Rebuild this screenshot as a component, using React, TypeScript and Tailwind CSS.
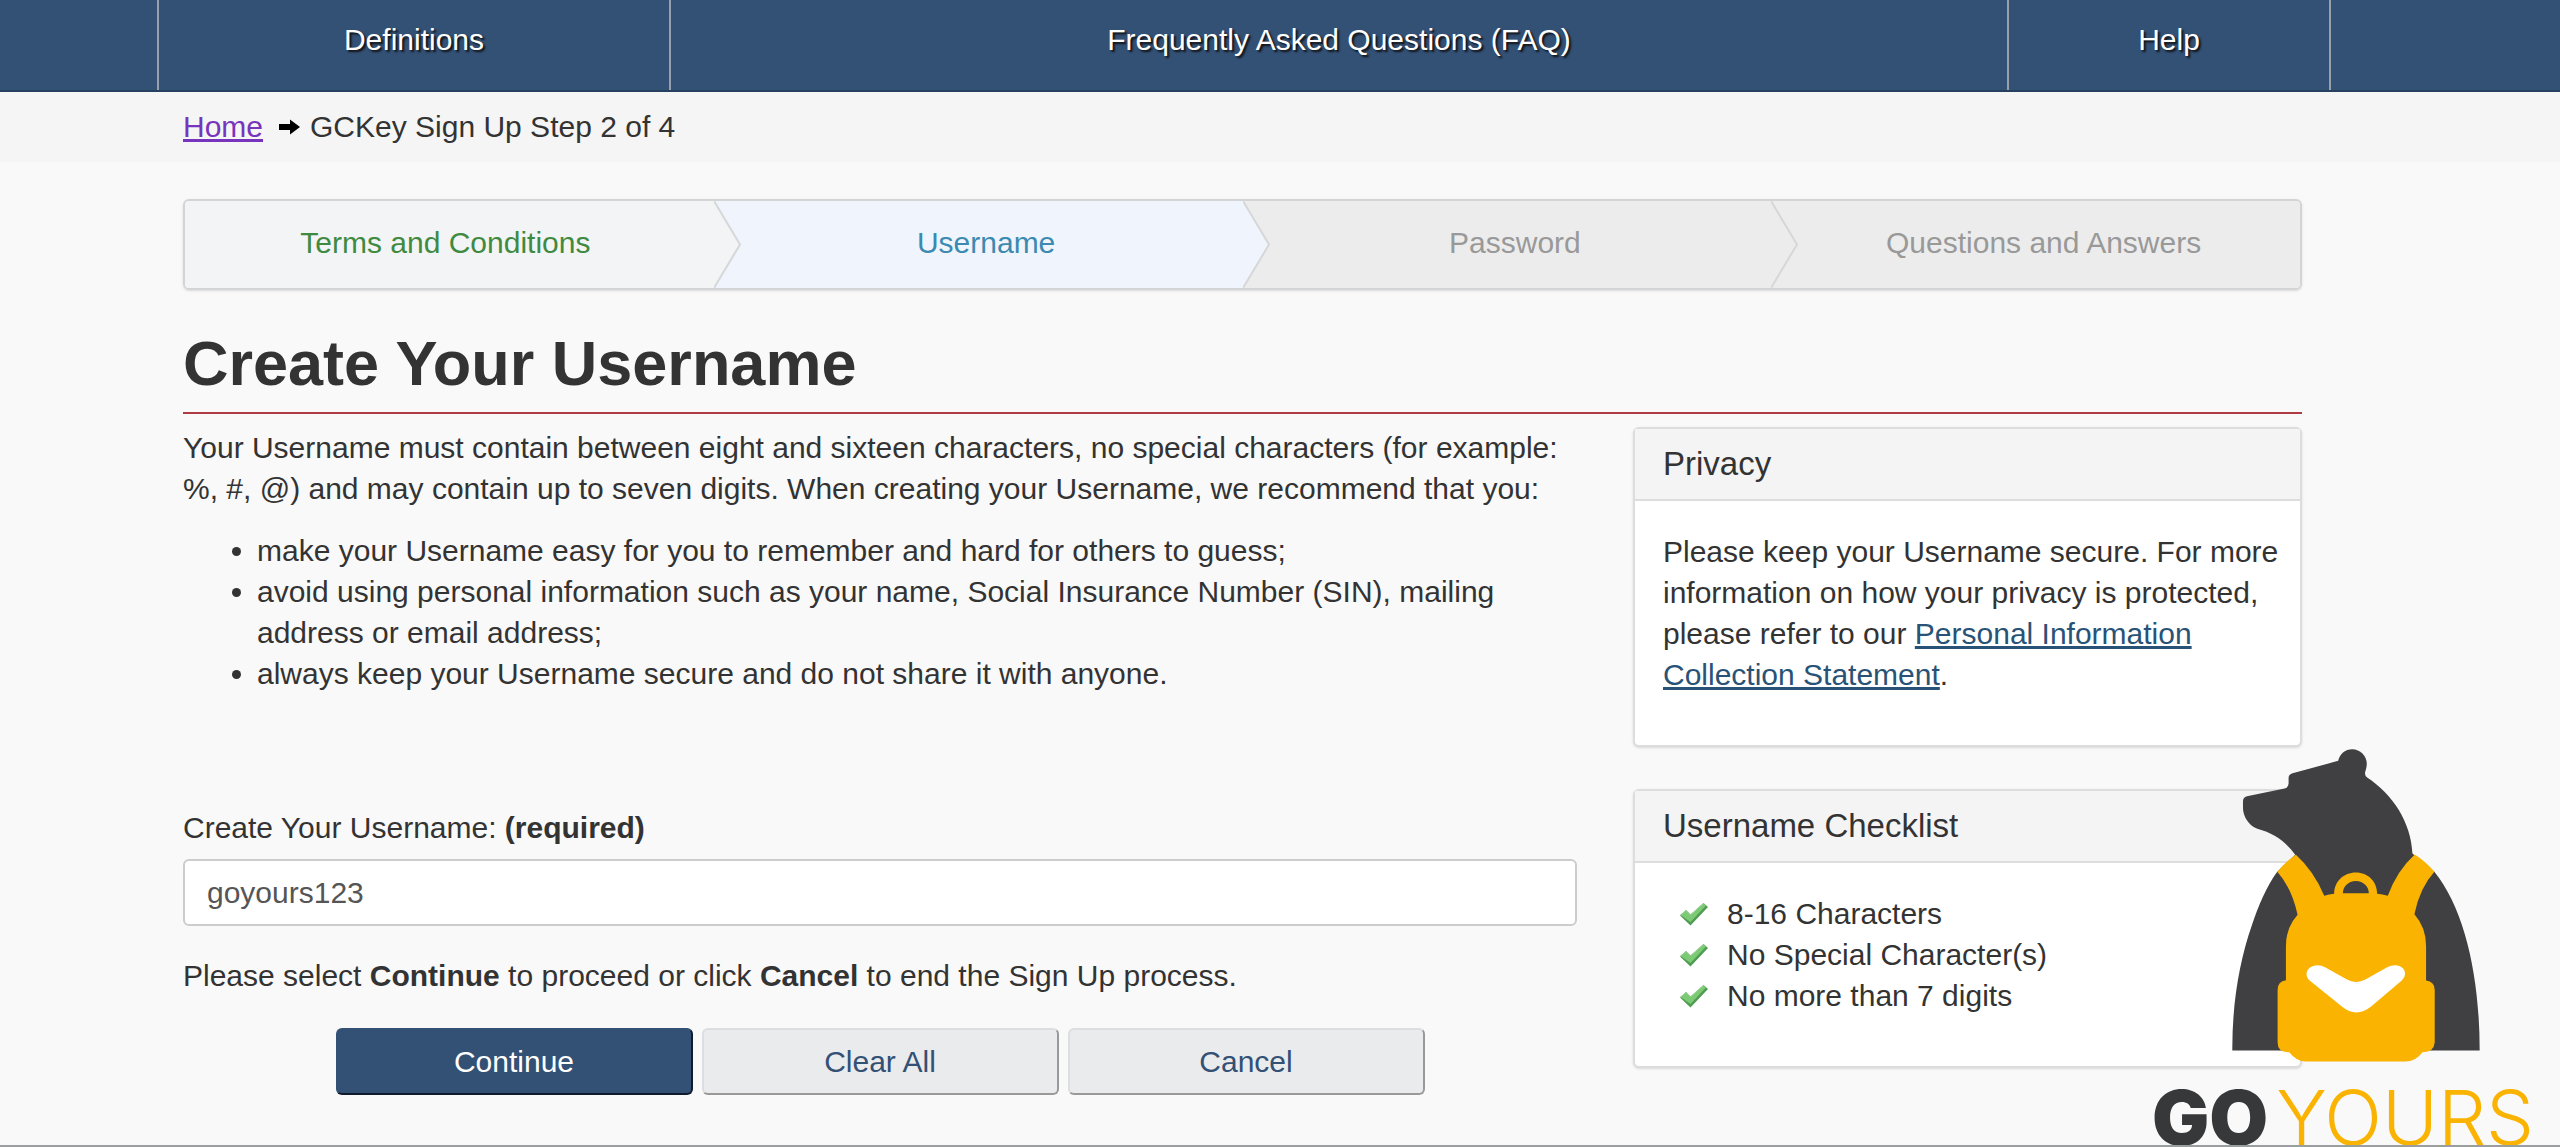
import type { ReactNode } from "react";

const steps = [
  { label: "Terms and Conditions", item: "bg-[#f3f4f5] pr-2 text-[#3f8a41]", fill: "#f3f4f5" },
  { label: "Username", item: "bg-[#f0f5fd] pl-4 text-[#3c8ab0]", fill: "#f0f5fd" },
  { label: "Password", item: "bg-[#ececec] pl-4 text-[#999]", fill: "#ececec" },
  { label: "Questions and Answers", item: "bg-[#ececec] pl-4 text-[#999]", fill: "" },
];

const rules = ["8-16 Characters", "No Special Character(s)", "No more than 7 digits"];

const CheckIcon = () => (
  <svg viewBox="0 0 30 24" className="h-6 w-[30px] shrink-0" aria-hidden="true">
    <path d="M1 13.500 7 8l4.500 4.500L24.500 1 29 5 11.500 23.500z" fill="#4f9c53" />
    <path d="M1.500 13 7 8.500l4.500 4.500L24.500 1.500l2.500 2L11.500 20z" fill="#7ccb74" />
    <path d="M1.500 13 7 8.500l4.500 4.500L24.500 1.500" fill="none" stroke="#9bd596" strokeWidth="1" />
  </svg>
);

const ArrowIcon = () => (
  <svg viewBox="0 0 21 16" className="h-4 w-[21px]" aria-hidden="true">
    <path d="M0 5h11V.500L21 8l-10 7.500V11H0z" fill="#000" />
  </svg>
);

const StepArrow = ({ fill }: { fill: string }) => (
  <svg
    viewBox="0 0 28 87"
    preserveAspectRatio="none"
    className="absolute top-0 left-full z-10 h-full w-7"
    aria-hidden="true"
  >
    <path d="M0 0 26 43.500 0 87z" fill={fill} />
    <path d="M0 0 26 43.500 0 87" fill="none" stroke="#d6d7d9" strokeWidth="2" />
  </svg>
);

const Card = ({ title, children }: { title: string; children: ReactNode }) => (
  <section className="rounded-md border-2 border-[#ddd] bg-white shadow-sm">
    <h2 className="border-b-2 border-[#ddd] bg-[#f4f4f4] px-7 pt-[14px] pb-[15px] text-[33px] leading-[41px]">
      {title}
    </h2>
    <div className="pt-[30px] pr-4 pb-[50px] pl-7">{children}</div>
  </section>
);

const BearLogo = () => (
  <svg viewBox="276 59 745 939" className="h-[313px] w-[248px]" aria-hidden="true">
    <path
      d="M277 964C276 820 300 690 335 590C355 530 380 470 412 427L466 376C440 340 405 312 352 298C325 288 309 260 309 235V215Q309 203 321 200L434 177Q446 174 446 162V145Q446 134 458 131L595 94C600 72 617 59 637 59C661 59 681 79 681 103C681 118 674 128 676 134Q676 140 682 144C760 195 814 280 818 372L884 427C975 540 1020 740 1020 964z"
      fill="#404042"
    />
    <path
      d="M412 427Q437 396 468 376Q522 425 553 499Q568 494 583 493C583 455 612 429 648 429C684 429 712 455 712 493Q728 494 744 499Q772 423 825 375Q858 396 884 427Q840 475 824 555Q859 595 859 650V754Q885 758 885 782V940Q882 970 848 969Q828 997 797 997H497Q470 997 448 969Q413 970 413 940V782Q413 756 438 753V650Q438 595 473 556Q455 475 412 427z"
      fill="#f9b300"
    />
    <path d="M609 492C609 472 625 455 648 455C671 455 687 472 687 492z" fill="#404042" />
    <path
      d="M533 708Q545 708 557 715L620 750Q649 766 678 750L741 715Q753 708 766 708C784 708 796 720 796 734Q796 745 786 754L694 832Q649 868 606 832L512 756Q500 747 500 735C500 719 515 708 533 708z"
      fill="#fff"
    />
  </svg>
);

const App = () => {
  return (
    <div className="relative flex min-h-screen flex-col overflow-hidden border-b-2 border-[#9a9e9e] bg-[#f9f9f9] font-['Liberation_Sans',Arial,sans-serif] text-[30px] leading-[41px] text-[#333]">
      <nav className="grid h-[92px] grid-cols-[157fr_512fr_1338fr_324fr_229fr] border-b-2 border-[#26415f] bg-[#335075] text-center text-white [text-shadow:2px_2px_2px_#111]">
        <span />
        <a href="#definitions" className="border-l-2 border-[#97a0ab] pt-[19px]">
          Definitions
        </a>
        <a href="#faq" className="border-l-2 border-[#97a0ab] pt-[19px]">
          Frequently Asked Questions (FAQ)
        </a>
        <a href="#help" className="border-x-2 border-[#97a0ab] pt-[19px]">
          Help
        </a>
        <span />
      </nav>

      <div className="flex items-center bg-[#f5f5f5] pt-[14px] pb-[15px] pl-[183px]">
        <a href="#home" className="mr-4 text-[#7834bc] underline">
          Home
        </a>
        <ArrowIcon />
        <span className="ml-[10px]">GCKey Sign Up Step 2 of 4</span>
      </div>

      <main className="pr-[258px] pl-[183px]">
        <ol className="mt-[37px] grid h-[91px] grid-cols-4 overflow-hidden rounded-md border-2 border-[#d2d4d6] text-center shadow-sm">
          {steps.map((step) => (
            <li key={step.label} className={`relative pt-[21px] ${step.item}`}>
              {step.label}
              {step.fill && <StepArrow fill={step.fill} />}
            </li>
          ))}
        </ol>

        <h1 className="mt-[37px] border-b-2 border-[#af3c43] pb-[13px] text-[63px] leading-[72px] font-bold">
          Create Your Username
        </h1>

        <div className="mt-[13px] grid grid-cols-[1394fr_669fr] gap-14">
          <form onSubmit={(e) => e.preventDefault()}>
            <p>
              Your Username must contain between eight and sixteen characters, no special characters
              (for example: %, #, @) and may contain up to seven digits. When creating your
              Username, we recommend that you:
            </p>
            <ul className="mt-[21px] list-disc pl-[74px]">
              <li>make your Username easy for you to remember and hard for others to guess;</li>
              <li>
                avoid using personal information such as your name, Social Insurance Number (SIN),
                mailing address or email address;
              </li>
              <li>always keep your Username secure and do not share it with anyone.</li>
            </ul>

            <label htmlFor="username" className="mt-[113px] block">
              Create Your Username: <strong>(required)</strong>
            </label>
            <input
              id="username"
              type="text"
              defaultValue="goyours123"
              className="mt-[11px] block h-[67px] w-full rounded-md border-2 border-[#ccc] bg-white px-[22px] text-[#555]"
            />
            <p className="mt-[29px]">
              Please select <strong>Continue</strong> to proceed or click <strong>Cancel</strong> to
              end the Sign Up process.
            </p>

            <div className="mt-8 flex justify-center gap-[9px]">
              <button
                type="submit"
                className="h-[67px] w-[357px] rounded-md border-2 border-[#335075] border-r-[#0f1c2e] border-b-[#0f1c2e] bg-[#335075] text-white"
              >
                Continue
              </button>
              <button
                type="reset"
                className="h-[67px] w-[357px] rounded-md border-2 border-[#dcdee1] border-r-[#999] border-b-[#999] bg-[#eaebed] text-[#335075]"
              >
                Clear All
              </button>
              <button
                type="button"
                className="h-[67px] w-[357px] rounded-md border-2 border-[#dcdee1] border-r-[#999] border-b-[#999] bg-[#eaebed] text-[#335075]"
              >
                Cancel
              </button>
            </div>
          </form>

          <aside className="flex flex-col gap-[42px]">
            <Card title="Privacy">
              <p>
                Please keep your Username secure. For more information on how your privacy is
                protected, please refer to our{" "}
                <a href="#privacy" className="text-[#295376] underline">
                  Personal Information Collection Statement
                </a>
                .
              </p>
            </Card>
            <Card title="Username Checklist">
              <ul className="pl-4">
                {rules.map((rule) => (
                  <li key={rule} className="flex items-center gap-[18px]">
                    <CheckIcon />
                    {rule}
                  </li>
                ))}
              </ul>
            </Card>
          </aside>
        </div>
      </main>

      <div className="absolute right-0 bottom-0 flex w-[408px] flex-col items-center">
        <BearLogo />
        <div className="mt-[27px] flex w-full items-baseline gap-2 font-[Inter,sans-serif] text-[76px] leading-[56px] whitespace-nowrap">
          <span className="font-black text-[#36383a]">GO</span>
          <span className="font-light text-[#f9b300]">YOURS</span>
        </div>
      </div>
    </div>
  );
};

export default App;
